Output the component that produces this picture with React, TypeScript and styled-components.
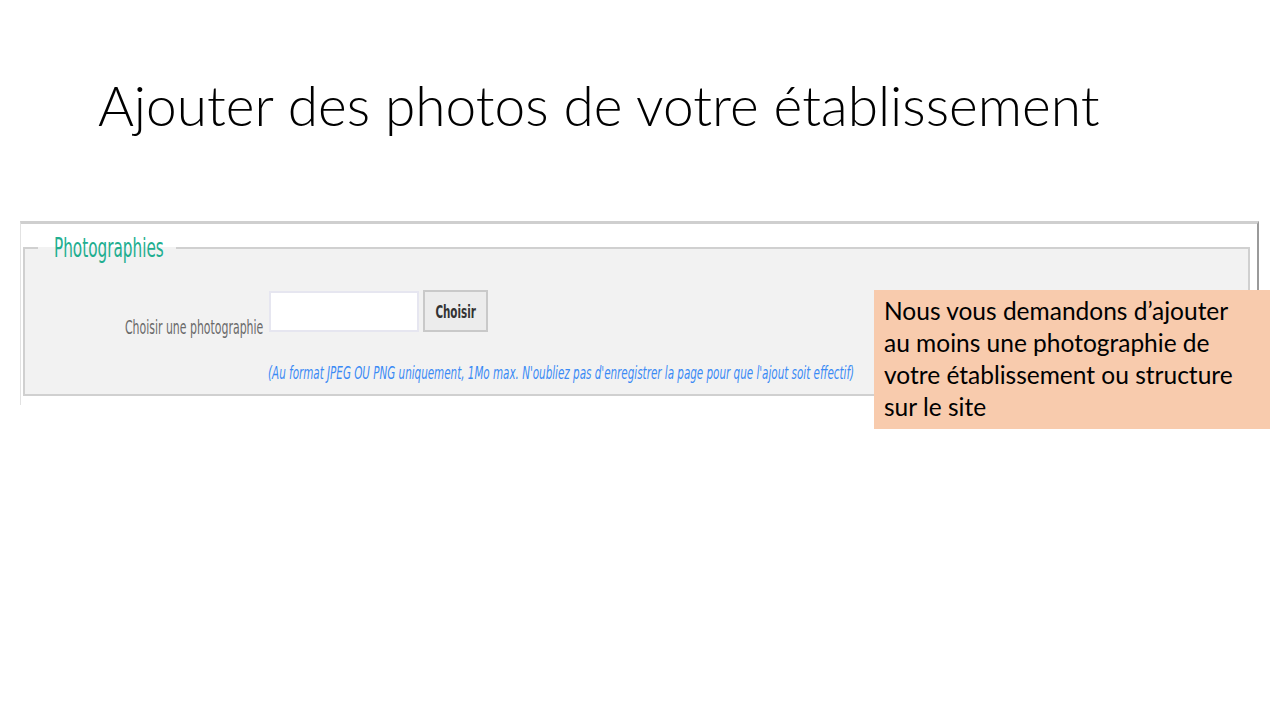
import React from "react";
import styled, { createGlobalStyle } from "styled-components";

const GlobalStyle = createGlobalStyle`
  html, body {
    margin: 0;
    padding: 0;
    background: #ffffff;
  }
`;

// the pasted screenshot is squeezed sideways, so its texts are too
const shotFont = `"DejaVu Sans Condensed", "DejaVu Sans", sans-serif`;

const App = () => {
  return (
    <>
      <GlobalStyle />
      <Slide>
        <Title>Ajouter des photos de votre établissement</Title>
        <Shot>
          <Fieldset>
            <Legend>
              <Squeeze>Photographies</Squeeze>
            </Legend>
            <Row>
              <Label htmlFor="photo">
                <Squeeze $origin="right">Choisir une photographie</Squeeze>
              </Label>
              <FileBox id="photo" readOnly />
              <Button type="button">
                <Squeeze $origin="center">Choisir</Squeeze>
              </Button>
            </Row>
            <Hint>
              <Squeeze>
                (Au format JPEG OU PNG uniquement, 1Mo max. N'oubliez pas
                d'enregistrer la page pour que l'ajout soit effectif)
              </Squeeze>
            </Hint>
          </Fieldset>
        </Shot>
        <Callout>
          Nous vous demandons d’ajouter au moins une photographie de votre
          établissement ou structure sur le site
        </Callout>
      </Slide>
    </>
  );
};

const Slide = styled.div`
  position: relative;
  width: 1280px;
  height: 720px;
  overflow: hidden;
  background: #ffffff;
  padding-top: 72px;
  box-sizing: border-box;
`;

const Title = styled.h1`
  margin: 0 0 0 98px;
  font-family: Lato, "Open Sans", sans-serif;
  font-weight: 300;
  font-size: 55px;
  line-height: 66px;
  color: #000;
  white-space: nowrap;
`;

const Shot = styled.div`
  margin: 83px 0 0 20px;
  width: 1239px;
  height: 184px;
  border-top: 3px solid #cfcfcf;
  border-left: 1px solid #e2e2e2;
  border-right: 2px solid #9a9a9a;
  box-sizing: border-box;
  padding: 9px 7px 0 2px;
`;

const Fieldset = styled.fieldset`
  margin: 0;
  padding: 0 0 10px 0;
  background: #f2f2f2;
  border: 2px solid #d0d0d0;
  box-sizing: border-box;
  height: 163px;
`;

const Squeeze = styled.span<{ $origin?: string }>`
  display: inline-block;
  white-space: nowrap;
  transform: scaleX(0.64);
  transform-origin: ${(p) => p.$origin || "left"} center;
`;

const Legend = styled.legend`
  width: 138px;
  box-sizing: border-box;
  margin-left: 13px;
  padding: 0 0 0 16px;
  font-family: ${shotFont};
  font-size: 26.5px;
  line-height: 30px;
  color: #22ae90;
  white-space: nowrap;
  overflow: visible;
`;

const Row = styled.div`
  display: flex;
  align-items: flex-end;
  gap: 6px;
  margin-top: 27px;
`;

const Label = styled.label`
  width: 238px;
  text-align: right;
  font-family: ${shotFont};
  font-size: 19px;
  line-height: 22px;
  color: #6a6a6a;
  margin-bottom: -6px;
  white-space: nowrap;
`;

const FileBox = styled.input`
  width: 150px;
  height: 41px;
  box-sizing: border-box;
  border: 2px solid #e6e6f0;
  background: #ffffff;
  outline: none;
`;

const Button = styled.button`
  align-self: flex-start;
  width: 65px;
  height: 42px;
  margin-left: -2px;
  box-sizing: border-box;
  border: 2px solid #c9c9c9;
  background: #ececec;
  font-family: ${shotFont};
  font-weight: bold;
  font-size: 18px;
  color: #333;
  padding: 0;
  display: flex;
  align-items: center;
  justify-content: center;
  overflow: visible;
  white-space: nowrap;
`;

const Hint = styled.p`
  margin: 30px 0 0 243px;
  font-family: ${shotFont};
  font-style: italic;
  font-size: 18px;
  line-height: 21px;
  color: #3a8af5;
  white-space: nowrap;
`;

const Callout = styled.div`
  position: absolute;
  left: 874px;
  top: 290px;
  width: 396px;
  height: 139px;
  box-sizing: border-box;
  padding: 5px 20px 0 10px;
  background: #f8cbad;
  font-family: Lato, "Open Sans", sans-serif;
  font-size: 24.5px;
  line-height: 32px;
  color: #000;
`;

export default App;
